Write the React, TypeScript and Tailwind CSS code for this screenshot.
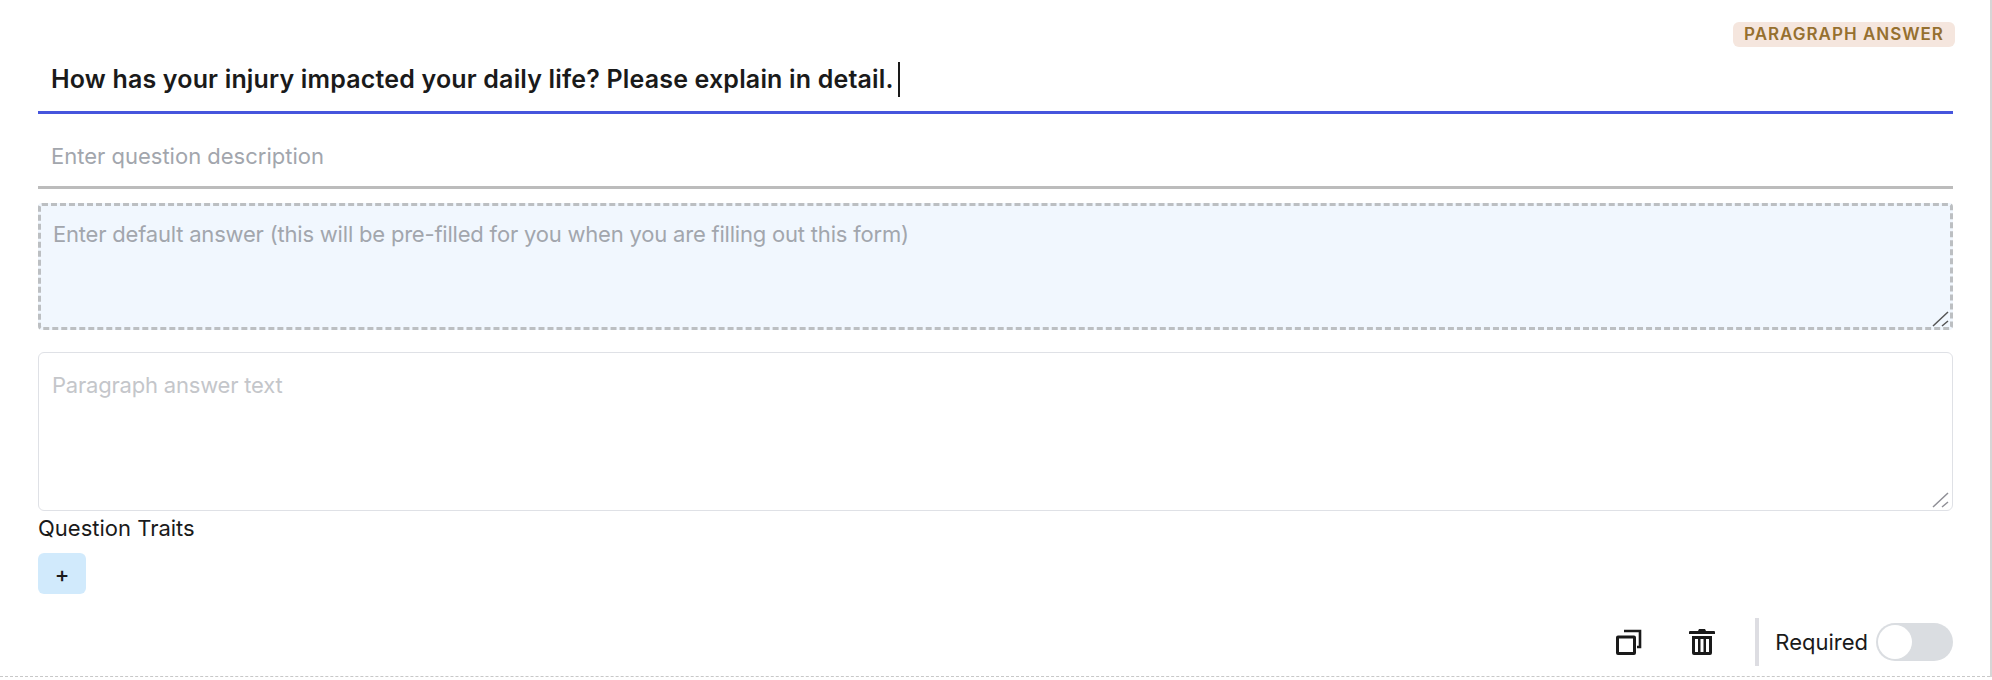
import React from "react";

const CopyIcon = () => (
  <svg width="26" height="26" viewBox="0 0 26 26" fill="none" stroke="#1a1a1a">
    <rect x="1.5" y="8" width="17" height="16.5" rx="0.5" strokeWidth="3" />
    <path d="M8 2h16v16h-3" strokeWidth="2.6" />
  </svg>
);

const TrashIcon = () => (
  <svg width="26" height="26" viewBox="0 0 26 26" fill="#1a1a1a">
    <path d="M10 0h6l1 2h8a1 1 0 0 1 1 1v2H0V3a1 1 0 0 1 1-1h8z" />
    <path
      fillRule="evenodd"
      d="M3 7h20v17a2 2 0 0 1-2 2H5a2 2 0 0 1-2-2zm3 3v13h3V10zm5.5 0v13h3V10zm5.500 0v13h3V10z"
    />
  </svg>
);

const Handle = ({ color }: { color: string }) => (
  <svg
    width="18"
    height="16"
    viewBox="0 0 18 16"
    fill="none"
    stroke={color}
    strokeWidth="1.5"
    className="absolute right-[3px] bottom-[3px] pointer-events-none"
  >
    <path d="M1 15 16 1M10 15l6-5" />
  </svg>
);

export default function App() {
  return (
    <div className="h-[680px] w-full bg-white font-['Inter',sans-serif] text-[#1a1a1a] overflow-hidden">
      <div className="h-[677px] border-r-2 border-[#d6d6d6]">
        <div className="h-full border-b border-dashed border-[#c8c8c8] pl-[38px] pr-[37px] pt-[22px] flex flex-col">
          <div className="flex justify-end mr-[-2px]">
            <span className="h-[25px] w-[222px] rounded-md bg-[#f5e6de] text-[#96702f] text-[17px] font-semibold tracking-[1px] flex items-center justify-center leading-none whitespace-nowrap">
              PARAGRAPH ANSWER
            </span>
          </div>

          <div className="h-[67px] shrink-0 border-b-[3px] border-[#4655dd] pl-[13px] flex items-center">
            <span className="text-[25px] font-semibold leading-none tracking-[0.17px] whitespace-nowrap">
              How has your injury impacted your daily life? Please explain in detail.
            </span>
            <span className="ml-[4px] h-[35px] w-[2px] bg-[#1a1a1a]" />
          </div>

          <input
            placeholder="Enter question description"
            className="h-[75px] w-full shrink-0 border-b-[3px] border-[#bcbcbc] pl-[13px] pt-[12px] text-[22px] font-normal outline-none placeholder:text-[#a2a6ad]"
          />

          <div className="relative mt-[14px] h-[127px] shrink-0">
            <textarea
              placeholder="Enter default answer (this will be pre-filled for you when you are filling out this form)"
              className="block h-full w-full resize-none rounded-[4px] border-[3px] border-dashed border-[#bcbfc2] bg-[#f1f7fe] px-[12px] py-[14px] text-[22px] leading-[28px] tracking-[-0.2px] outline-none placeholder:text-[#a2a6ad]"
            />
            <Handle color="#555555" />
          </div>

          <div className="relative mt-[22px] h-[159px] shrink-0">
            <textarea
              placeholder="Paragraph answer text"
              className="block h-full w-full resize-none rounded-[6px] border border-[#dfe1e6] bg-white px-[13px] py-[18px] text-[22px] leading-[28px] tracking-[-0.2px] outline-none placeholder:text-[#c4c6ca]"
            />
            <Handle color="#8f8f96" />
          </div>

          <div className="mt-[3px] text-[22px] leading-[28px]">Question Traits</div>

          <button className="mt-[11px] flex h-[41px] w-[48px] items-center justify-center rounded-md bg-[#d1eafc] text-[22px] leading-none font-medium">
            +
          </button>

          <div className="mt-[24px] flex items-center justify-end">
            <CopyIcon />
            <div className="ml-[47px]">
              <TrashIcon />
            </div>
            <div className="ml-[40px] h-[48px] w-1 bg-[#dddde2]" />
            <span className="ml-[16px] text-[22px] leading-none">Required</span>
            <div className="ml-[8px] flex h-[38px] w-[77px] items-center rounded-full bg-[#dadde1] pl-[2px]">
              <div className="h-[34px] w-[34px] rounded-full bg-white" />
            </div>
          </div>
        </div>
      </div>
    </div>
  );
}
